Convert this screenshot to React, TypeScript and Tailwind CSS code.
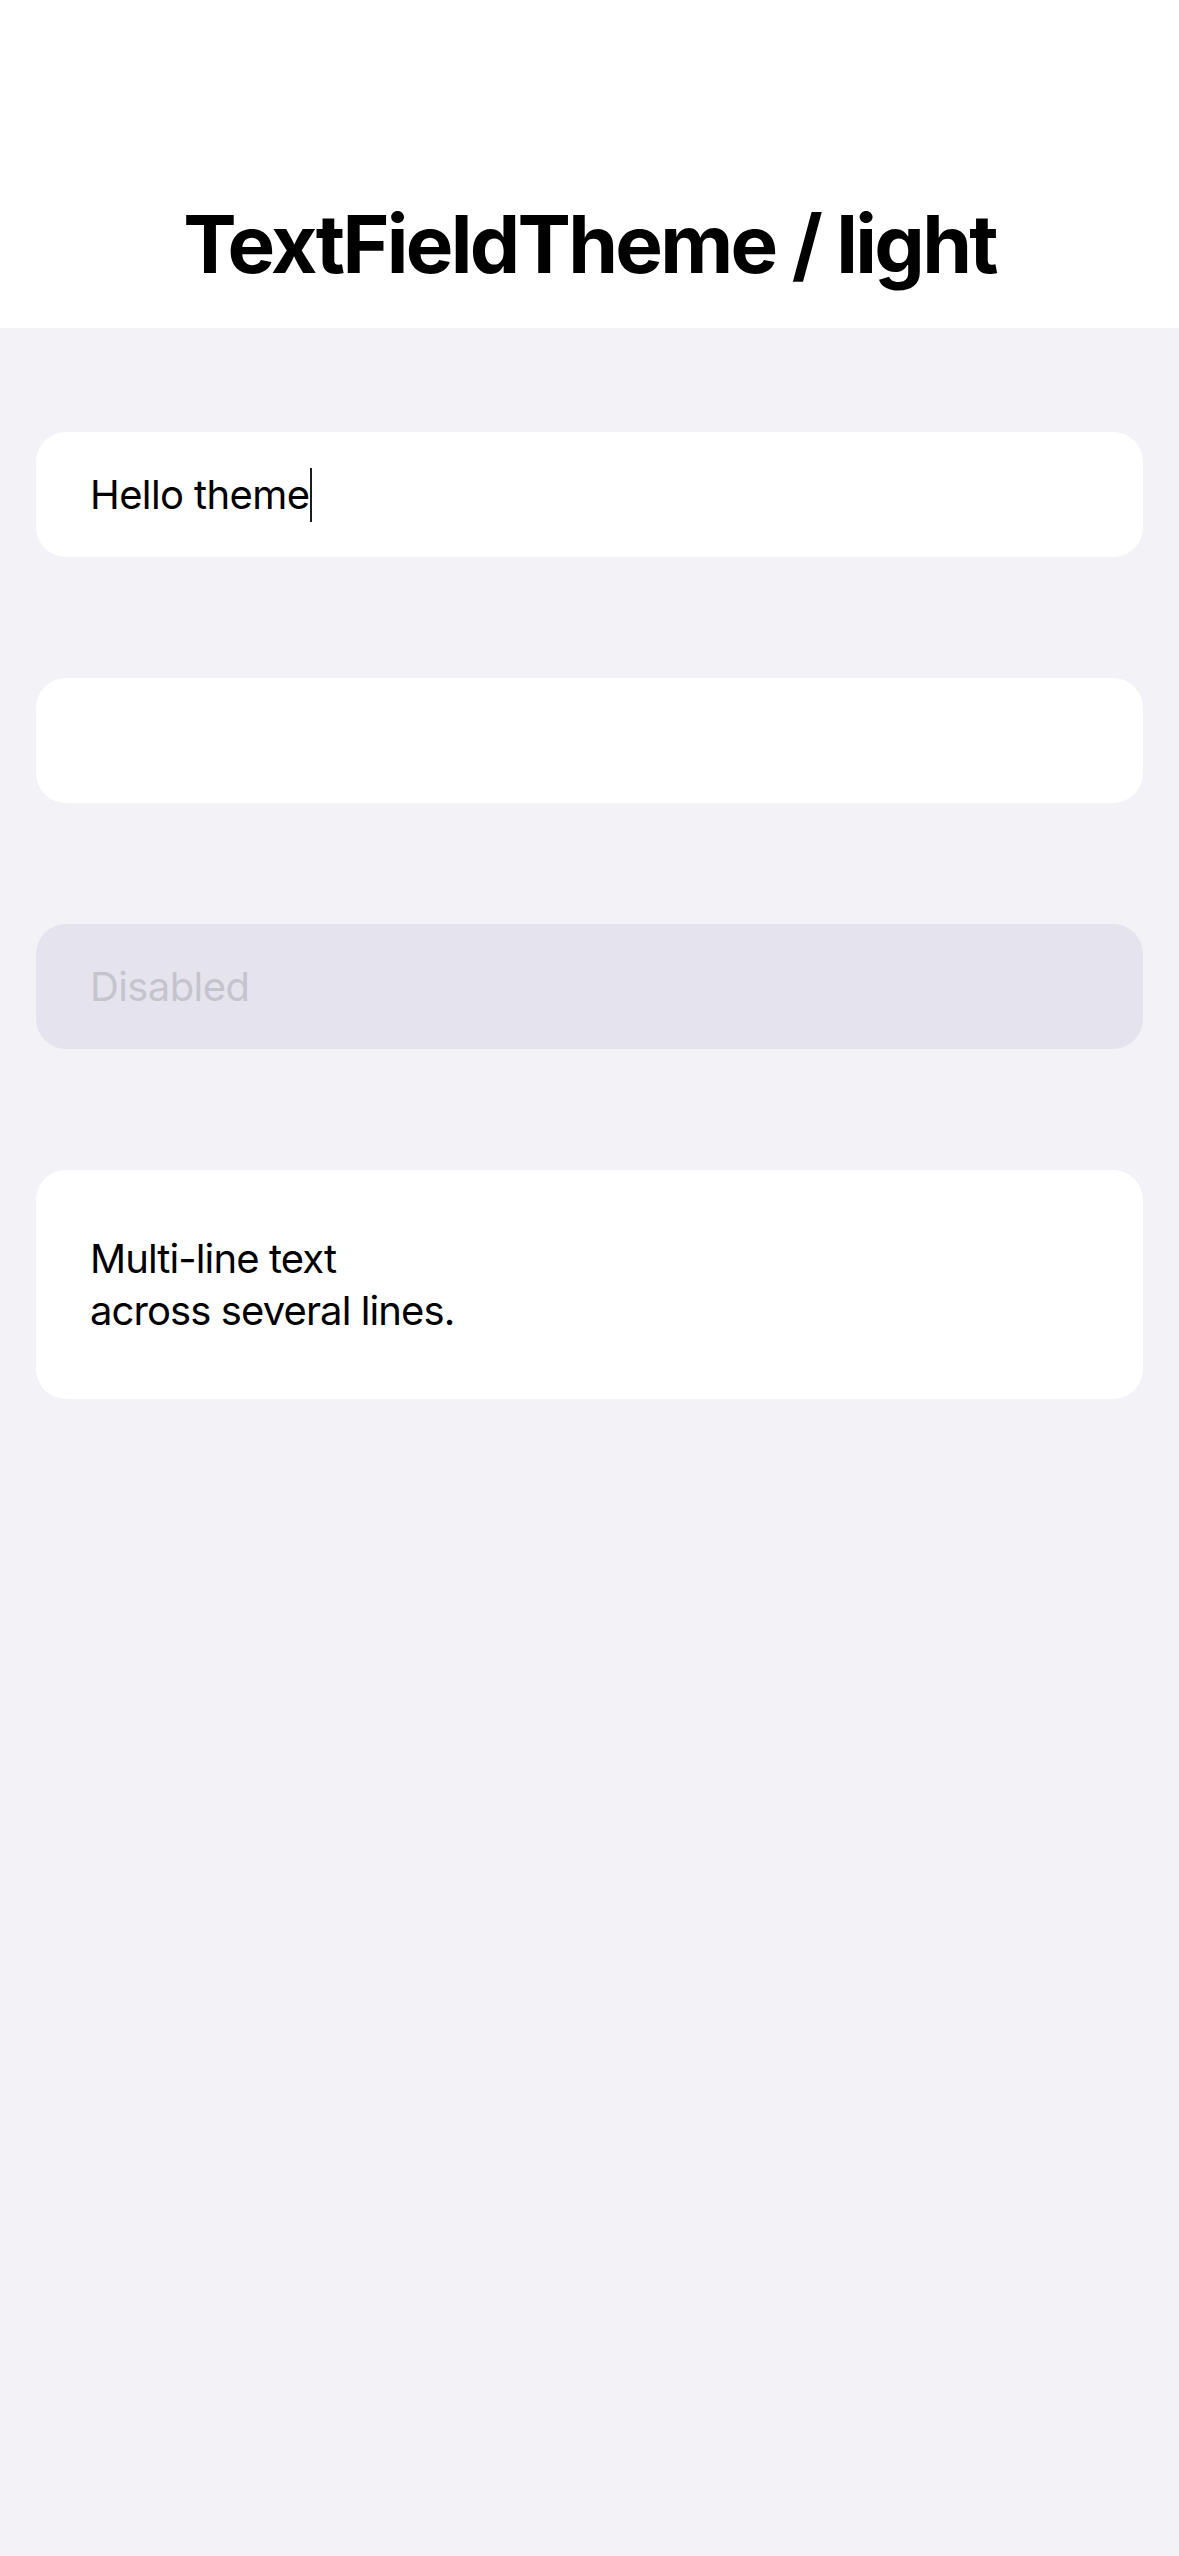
import React from 'react';

const FONT = 'font-["Inter",_"Roboto",_sans-serif]';

function Field({ children, disabled = false, tall = false }: { children?: React.ReactNode; disabled?: boolean; tall?: boolean }) {
  return (
    <div
      className={`flex items-center rounded-[30px] pl-[54px] pr-[56px] ${tall ? 'min-h-[229px]' : 'h-[125px]'} ${
        disabled ? 'bg-[#e5e4ee]' : 'bg-white'
      }`}
    >
      {children}
    </div>
  );
}

export default function App() {
  return (
    <div className={`min-h-[2556px] w-full bg-[#f2f2f7] ${FONT}`}>
      {/* Header */}
      <header className="flex h-[328px] items-end justify-center bg-white pb-[44px]">
        <h1 className="text-[80px] font-bold leading-none tracking-[-2.7px] text-black">TextFieldTheme / light</h1>
      </header>

      {/* Fields */}
      <main className="flex flex-col gap-[121px] px-[36px] pt-[104px]">
        <Field>
          <div className="flex items-center text-[40px] leading-[52px] tracking-[-0.6px] text-black">
            <span>Hello theme</span>
            <span className="ml-[1px] h-[54px] w-[2px] bg-[#1c1c1e]" />
          </div>
        </Field>

        <Field />

        <Field disabled>
          <span className="text-[40px] leading-[52px] tracking-[-0.6px] text-[#c5c4cd]">Disabled</span>
        </Field>

        <Field tall>
          <div className="text-[40px] leading-[52px] tracking-[-0.9px] text-black">
            <div>Multi-line text</div>
            <div>across several lines.</div>
          </div>
        </Field>
      </main>
    </div>
  );
}
